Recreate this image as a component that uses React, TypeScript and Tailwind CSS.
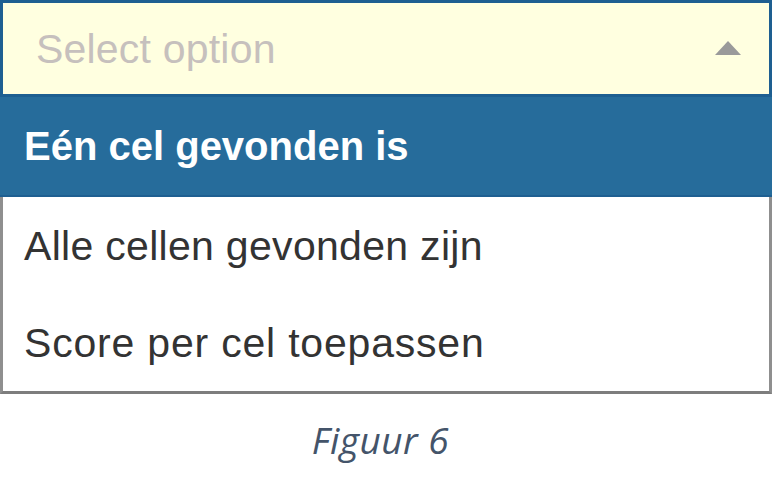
export default function App() {
  return (
    <div className="w-[773px] h-[491px] bg-white flex flex-col font-['Liberation_Sans',Arial,sans-serif]">
      <div className="w-[772px]">
        <div className="h-[97px] border-[3px] border-[#1e5f91] bg-[#ffffe0] flex items-center justify-between pl-[33px] pr-[28px]">
          <span className="text-[41px] leading-none text-[#c6c0bd] tracking-[0.2px] mt-[2px]">Select option</span>
          <svg width="26" height="14" viewBox="0 0 26 14" className="mb-[2px]">
            <polygon points="13,0 26,14 0,14" fill="#9a9a9a" />
          </svg>
        </div>
        <div className="border-x-[3px] border-b-[3px] border-x-[#8f8f8f] border-b-[#7d7d7d]">
          <div className="h-[100px] bg-[#266c9b] flex items-center -mx-[3px] pl-[24px] border-b-[2px] border-[#1e5f91]">
            <span className="text-[40px] leading-none font-bold text-white">Eén cel gevonden is</span>
          </div>
          <div className="h-[98px] flex items-center pl-[21px]">
            <span className="text-[41px] leading-none text-[#333333] tracking-[0.3px]">Alle cellen gevonden zijn</span>
          </div>
          <div className="h-[96px] flex items-center pl-[21px]">
            <span className="text-[41px] leading-none text-[#333333] tracking-[0.8px]">Score per cel toepassen</span>
          </div>
        </div>
      </div>
      <div className="flex justify-center pt-[27px]">
        <span className="font-['Open_Sans',sans-serif] italic text-[37px] leading-none text-[#44546a] tracking-[0.5px] ml-[-12px]">Figuur 6</span>
      </div>
    </div>
  );
}
